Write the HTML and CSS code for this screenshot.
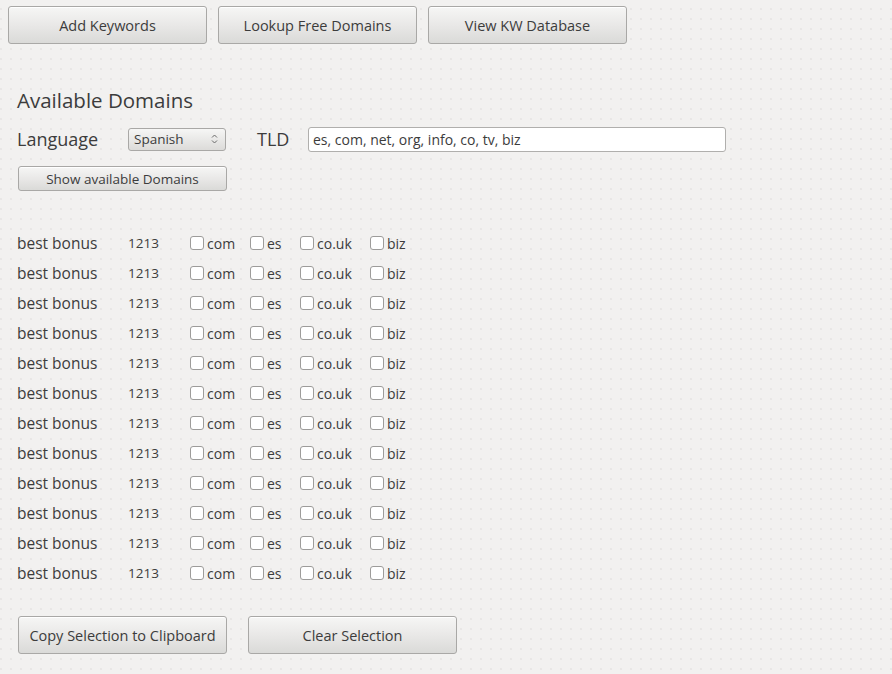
FILE: index.html
```html
<!DOCTYPE html>
<html>
<head>
<meta charset="utf-8">
<link rel="stylesheet" href="styles.css">
</head>
<body>
<div class="toolbar">
  <button class="btn big">Add Keywords</button>
  <button class="btn big">Lookup Free Domains</button>
  <button class="btn big">View KW Database</button>
</div>
<div class="panel">
  <h2 class="title">Available Domains</h2>
  <div class="filters">
    <span class="lbl lang">Language</span>
    <div class="combo"><span>Spanish</span>
      <svg class="arrows" width="7" height="12" viewBox="0 0 7 12"><path d="M1 4.5 L3.5 2 L6 4.5 M1 7.5 L3.5 10 L6 7.5" fill="none" stroke="#6a6a6a" stroke-width="1"/></svg>
    </div>
    <span class="lbl tld">TLD</span>
    <input class="tld-input" type="text" value="es, com, net, org, info, co, tv, biz">
  </div>
  <button class="btn small show">Show available Domains</button>
  <div class="rows" id="rows"></div>
  <div class="actions">
    <button class="btn big act">Copy Selection to Clipboard</button>
    <button class="btn big act">Clear Selection</button>
  </div>
</div>
<script>
var rows = document.getElementById('rows');
var html = '';
for (var i = 0; i < 12; i++) {
  html += '<div class="row"><span class="kw">best bonus</span><span class="num">1213</span>' +
    '<label class="cb c1"><span class="box"></span>com</label>' +
    '<label class="cb c2"><span class="box"></span>es</label>' +
    '<label class="cb c3"><span class="box"></span>co.uk</label>' +
    '<label class="cb c4"><span class="box"></span>biz</label></div>';
}
rows.innerHTML = html;
</script>
</body>
</html>
```

FILE: styles.css
```css
* { box-sizing: border-box; }
html, body { margin: 0; padding: 0; }
body {
  width: 892px;
  height: 674px;
  overflow: hidden;
  font-family: "Open Sans", "DejaVu Sans", sans-serif;
  color: #3c3c3c;
  background-color: #f2f1f0;
  background-image: radial-gradient(circle, #dddbd9 0.6px, transparent 0.8px);
  background-size: 10px 10px;
  background-position: -4px 4px;
}
.btn {
  font-family: "Open Sans", "DejaVu Sans", sans-serif;
  color: #3c3c3c;
  border: 1px solid #a9a8a6;
  border-radius: 3px;
  background: linear-gradient(#f6f6f5, #e9e8e7 50%, #dadad8);
  box-shadow: inset 0 1px 0 #ffffff;
  padding: 0;
  margin: 0;
}
.toolbar {
  display: flex;
  gap: 11px;
  padding: 6px 0 0 8px;
}
.big { width: 199px; height: 38px; font-size: 14.5px; }
.panel { padding-left: 17px; }
.title {
  font-weight: normal;
  font-size: 20.5px;
  margin: 43px 0 0 0;
  line-height: 26px;
}
.filters {
  display: flex;
  align-items: center;
  margin-top: 13px;
  height: 26px;
}
.lbl { font-size: 18px; }
.lang { width: 111px; }
.combo {
  width: 98px;
  height: 23px;
  border: 1px solid #a9a8a6;
  border-radius: 3px;
  background: linear-gradient(#f6f6f5, #dcdbd9);
  display: flex;
  align-items: center;
  justify-content: space-between;
  padding: 0 7px 0 5px;
  font-size: 13.5px;
}
.arrows { display: block; }
.tld { margin-left: 31px; width: 51px; }
.tld-input {
  width: 418px;
  height: 25px;
  border: 1px solid #b0afad;
  border-radius: 3px;
  background: #fff;
  font-family: "Open Sans", "DejaVu Sans", sans-serif;
  font-size: 14px;
  color: #3c3c3c;
  padding: 0 0 0 4px;
  outline: none;
}
.small {
  display: block;
  width: 209px;
  height: 25px;
  font-size: 13.5px;
  margin: 14px 0 0 1px;
}
.rows { margin-top: 37px; }
.row {
  display: flex;
  align-items: center;
  height: 30px;
}
.kw { width: 111px; font-size: 15.5px; }
.num { width: 62px; font-size: 13.5px; }
.cb {
  display: flex;
  align-items: center;
  font-size: 14px;
}
.box {
  width: 14px;
  height: 14px;
  border: 1px solid #9d9c9a;
  border-radius: 3px;
  background: #fff;
  margin-right: 3px;
}
.c1 { width: 60px; }
.c2 { width: 50px; }
.c3 { width: 70px; }
.actions {
  display: flex;
  gap: 21px;
  margin: 28px 0 0 1px;
}
.act { width: 209px; }
```
